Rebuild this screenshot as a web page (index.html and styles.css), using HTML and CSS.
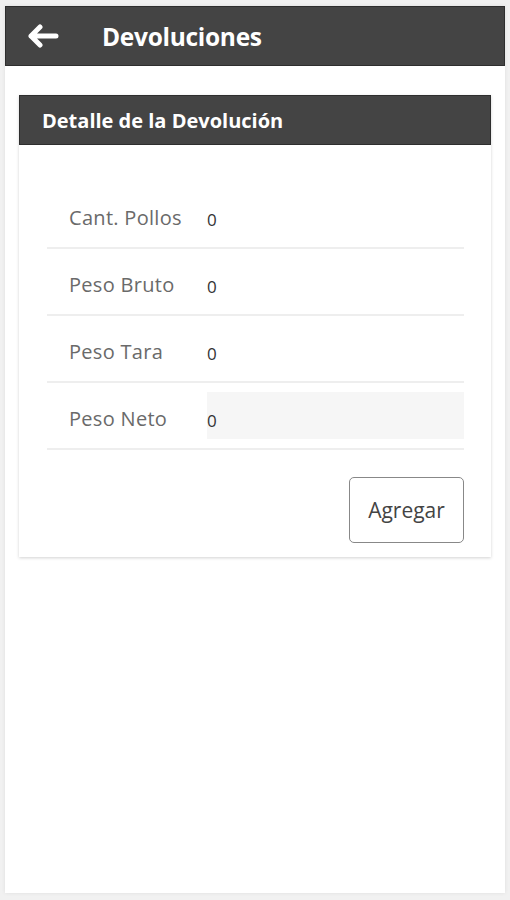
FILE: index.html
```html
<!DOCTYPE html>
<html lang="es">
<head>
    <meta charset="utf-8">
    <link rel="stylesheet" href="styles.css">
</head>
<body>
<div class="app">
    <header class="topbar">
        <a class="back" href="#">
            <svg width="32" height="24" viewBox="0 0 32 24">
                <path d="M13 3 L4 12 L13 21 M4 12 H29" fill="none" stroke="#fff" stroke-width="5" stroke-linecap="round" stroke-linejoin="round"/>
            </svg>
        </a>
        <h1>Devoluciones</h1>
    </header>
    <section class="card">
        <div class="card-title">Detalle de la Devolución</div>
        <div class="card-body">
            <div class="row">
                <div class="label">Cant. Pollos</div>
                <div class="value">0</div>
            </div>
            <div class="row">
                <div class="label">Peso Bruto</div>
                <div class="value">0</div>
            </div>
            <div class="row">
                <div class="label">Peso Tara</div>
                <div class="value">0</div>
            </div>
            <div class="row">
                <div class="label">Peso Neto</div>
                <div class="value readonly">0</div>
            </div>
            <div class="actions">
                <button class="btn">Agregar</button>
            </div>
        </div>
    </section>
</div>
</body>
</html>
```
FILE: styles.css
```css
body {
    margin: 0;
    padding: 6px 5px 7px 5px;
    background-color: #f1f1f1;
    font-family: "Open Sans", "Noto Sans", Arial, sans-serif;
}
.app {
    background-color: white;
    height: 887px;
    box-shadow: 0 0 4px rgba(0, 0, 0, 0.08);
    overflow: hidden;
}
.topbar {
    display: flex;
    align-items: center;
    height: 60px;
    box-sizing: border-box;
    background-color: #444;
    border: 1px solid #2e2e2e;
    padding-left: 21px;
}
.back {
    display: flex;
    width: 32px;
    margin-right: 43px;
}
.topbar h1 {
    margin: 0;
    color: white;
    font-size: 24.5px;
    font-weight: 700;
    letter-spacing: -0.3px;
}
.card {
    margin: 29px 14px 0 14px;
    box-shadow: 0 1px 3px rgba(0, 0, 0, 0.18);
}
.card-title {
    height: 50px;
    box-sizing: border-box;
    display: flex;
    align-items: center;
    padding-left: 22px;
    background-color: #444;
    border: 1px solid #2e2e2e;
    color: white;
    font-size: 20px;
    font-weight: 700;
}
.card-body {
    padding: 37px 27px 14px 28px;
}
.row {
    display: flex;
    align-items: center;
    height: 67px;
    box-sizing: border-box;
    border-bottom: 2px solid #eeeeee;
}
.label {
    width: 160px;
    box-sizing: border-box;
    padding-left: 22px;
    padding-top: 5px;
    color: #6a6a6a;
    font-size: 20px;
    letter-spacing: 0.3px;
    white-space: nowrap;
}
.value {
    flex: 1;
    height: 47px;
    display: flex;
    align-items: center;
    padding-top: 10px;
    box-sizing: border-box;
    color: #333;
    font-size: 17px;
}
.readonly {
    background-color: #f6f6f6;
}
.actions {
    display: flex;
    justify-content: flex-end;
    padding-top: 27px;
}
.btn {
    width: 115px;
    height: 66px;
    background: white;
    border: 1.5px solid #888;
    border-radius: 5px;
    color: #444;
    font-family: inherit;
    font-size: 21px;
}
```
